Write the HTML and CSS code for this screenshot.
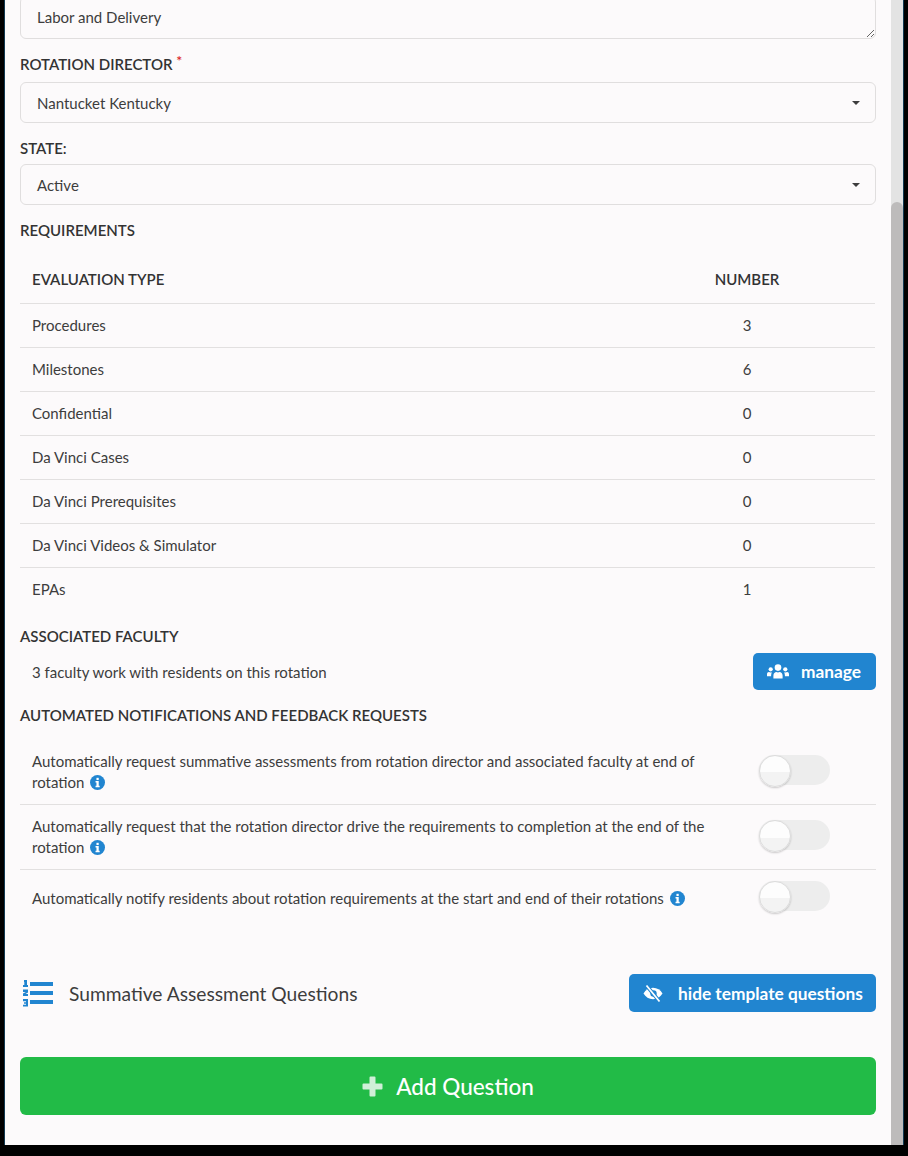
FILE: index.html
```html
<!DOCTYPE html>
<html lang="en">
<head>
    <meta charset="UTF-8">
    <title>Edit Rotation</title>
    <link rel="stylesheet" href="styles.css">
</head>
<body>
    <div class="window">
        <main class="form">
            <textarea class="field textarea" rows="1">Labor and Delivery</textarea>

            <label class="label label-director">ROTATION DIRECTOR <span class="required">*</span></label>
            <div class="field select">
                <span>Nantucket Kentucky</span>
                <span class="caret"></span>
            </div>

            <label class="label label-state">STATE:</label>
            <div class="field select">
                <span>Active</span>
                <span class="caret"></span>
            </div>

            <div class="label label-requirements">REQUIREMENTS</div>
            <table class="requirements">
                <thead>
                    <tr><th>EVALUATION TYPE</th><th class="number">NUMBER</th></tr>
                </thead>
                <tbody>
                    <tr><td>Procedures</td><td class="number">3</td></tr>
                    <tr><td>Milestones</td><td class="number">6</td></tr>
                    <tr><td>Confidential</td><td class="number">0</td></tr>
                    <tr><td>Da Vinci Cases</td><td class="number">0</td></tr>
                    <tr><td>Da Vinci Prerequisites</td><td class="number">0</td></tr>
                    <tr><td>Da Vinci Videos &amp; Simulator</td><td class="number">0</td></tr>
                    <tr><td>EPAs</td><td class="number">1</td></tr>
                </tbody>
            </table>

            <div class="label label-faculty">ASSOCIATED FACULTY</div>
            <div class="faculty-row">
                <span>3 faculty work with residents on this rotation</span>
                <button class="btn btn-manage">
                    <svg class="btn-icon" width="22" height="15" viewBox="0 0 22 15" fill="#fff">
                        <circle cx="11" cy="3.6" r="3.3"/>
                        <path d="M6.4 14.6v-2.9c0-2.4 1.6-3.7 3-3.7.5.3 1 .5 1.6.5s1.100-.2 1.600-.5c1.400 0 3 1.300 3 3.700v2.900z"/>
                        <circle cx="3.700" cy="5.300" r="2.100"/>
                        <circle cx="18.300" cy="5.300" r="2.100"/>
                        <path d="M0 12.300v-2c0-1.400.9-2.300 1.900-2.300.5.3 1.100.5 1.800.5.5 0 .9-.1 1.300-.2-.6.900-.9 2-.9 3.200v.8z"/>
                        <path d="M22 12.300v-2c0-1.400-.9-2.300-1.900-2.300-.5.3-1.100.5-1.800.5-.5 0-.9-.1-1.300-.2.600.9.900 2 .9 3.200v.8z"/>
                    </svg>
                    manage
                </button>
            </div>

            <div class="label label-auto">AUTOMATED NOTIFICATIONS AND FEEDBACK REQUESTS</div>
            <div class="notifications">
                <div class="notify-row">
                    <p>Automatically request summative assessments from rotation director and associated faculty at end of rotation <svg class="info" viewBox="0 0 16 16"><circle cx="8" cy="8" r="8" fill="#2185d0"/><rect x="6.900" y="3" width="2.400" height="2.400" fill="#fff"/><path d="M5.900 6.500h3.400v5h1v1.500H5.900v-1.500h1v-3.500h-1z" fill="#fff"/></svg></p>
                    <span class="toggle"></span>
                </div>
                <div class="notify-row">
                    <p>Automatically request that the rotation director drive the requirements to completion at the end of the rotation <svg class="info" viewBox="0 0 16 16"><circle cx="8" cy="8" r="8" fill="#2185d0"/><rect x="6.900" y="3" width="2.400" height="2.400" fill="#fff"/><path d="M5.900 6.500h3.400v5h1v1.500H5.900v-1.500h1v-3.500h-1z" fill="#fff"/></svg></p>
                    <span class="toggle"></span>
                </div>
                <div class="notify-row notify-last">
                    <p>Automatically notify residents about rotation requirements at the start and end of their rotations <svg class="info" viewBox="0 0 16 16"><circle cx="8" cy="8" r="8" fill="#2185d0"/><rect x="6.900" y="3" width="2.400" height="2.400" fill="#fff"/><path d="M5.900 6.500h3.400v5h1v1.500H5.900v-1.500h1v-3.500h-1z" fill="#fff"/></svg></p>
                    <span class="toggle"></span>
                </div>
            </div>

            <div class="summative-row">
                <div class="summative-title">
                    <svg class="list-icon" width="30" height="27" viewBox="0 0 30 27" fill="#2185d0">
                        <rect x="7" y="2" width="23" height="4"/>
                        <rect x="7" y="11" width="23" height="4"/>
                        <rect x="7" y="20" width="23" height="4"/>
                        <path d="M1 0h3v5h1v2H0V5h1.300V2H1z"/>
                        <path d="M0 9.500h5v3l-2.500 1.500H5v2H0v-2.500L2.800 12H0z"/>
                        <path d="M0 19h5v7.500H0v-1.800h3v-1H1v-1.500h2v-1H0z"/>
                    </svg>
                    <span>Summative Assessment Questions</span>
                </div>
                <button class="btn btn-hide">
                    <svg class="btn-icon" width="20" height="17" viewBox="0 0 20 17">
                        <path d="M0.500 8.500C2.500 5 6 2.800 10 2.800s7.500 2.200 9.500 5.700c-2 3.500-5.500 5.700-9.500 5.700S2.500 12 .5 8.500z" fill="#fff"/>
                        <circle cx="10.500" cy="8.500" r="3.200" fill="#2185d0"/>
                        <path d="M3.500 0.500 16.500 16.500" stroke="#2185d0" stroke-width="3.600"/>
                        <path d="M3.500 0.500 16.500 16.500" stroke="#fff" stroke-width="1.700"/>
                    </svg>
                    hide template questions
                </button>
            </div>

            <button class="btn-add">
                <svg width="21" height="21" viewBox="0 0 21 21" fill="#d0efd8">
                    <path d="M7.500 1.500a1 1 0 0 1 1-1h4a1 1 0 0 1 1 1v6h6a1 1 0 0 1 1 1v4a1 1 0 0 1-1 1h-6v6a1 1 0 0 1-1 1h-4a1 1 0 0 1-1-1v-6h-6a1 1 0 0 1-1-1v-4a1 1 0 0 1 1-1h6z"/>
                </svg>
                Add Question
            </button>
        </main>

        <div class="scrollbar">
            <div class="scrollbar-thumb"></div>
        </div>
    </div>
</body>
</html>
```

FILE: styles.css
```css
* {
    box-sizing: border-box;
}

html, body {
    margin: 0;
    height: 1156px;
    overflow: hidden;
}

body {
    background: #000;
    font-family: Lato, "Open Sans", sans-serif;
    font-size: 15px;
    color: #3d3d3d;
}

.window {
    display: flex;
    width: 900px;
    height: 1145px;
    margin-left: 4px;
    border-left: 1px solid #123a52;
    border-right: 1px solid #123a52;
    background: #fcfafb;
    overflow: hidden;
}

.form {
    width: 886px;
    flex: none;
    padding-left: 15px;
}

.scrollbar {
    width: 12px;
    flex: none;
    height: 1145px;
    padding-top: 202px;
    background: #e3e3e3;
}

.scrollbar-thumb {
    height: 100%;
    background: #bdbbbb;
    border-radius: 6px 6px 0 0;
}

/* fields */
.field {
    display: block;
    width: 856px;
    border: 1px solid #e0dede;
    border-radius: 6px;
    background: #fcfafb;
    color: #3d3d3d;
    font: 15px/20px Lato, sans-serif;
}

.textarea {
    height: 43px;
    margin: -4px 0 0;
    padding: 10px 16px;
    resize: vertical;
}

.select {
    display: flex;
    justify-content: space-between;
    align-items: center;
    height: 41px;
    padding: 0 15px 0 16px;
}

.caret {
    width: 0;
    height: 0;
    border-left: 4px solid transparent;
    border-right: 4px solid transparent;
    border-top: 4px solid #3d3d3d;
}

.label {
    display: block;
    font-weight: 600;
    font-size: 15px;
    line-height: 20px;
    color: #333;
}

.required {
    position: relative;
    top: -4px;
    color: #db2828;
    font-size: 14px;
}

.label-director { margin: 15px 0 7px; }
.label-state { margin: 15px 0 6px; }
.label-requirements { margin: 15px 0 0; }
.label-faculty { margin: 15px 0 0; }
.label-auto { margin: 15px 0 0; }

/* requirements table */
.requirements {
    width: 855px;
    margin-top: 19px;
    border-collapse: collapse;
}

.requirements th {
    height: 44px;
    padding: 0 12px 4px;
    text-align: left;
    font-weight: 600;
    font-size: 15px;
    color: #333;
}

.requirements td {
    height: 44px;
    padding: 0 12px;
    border-top: 1px solid #e2e0e0;
}

.requirements .number {
    width: 256px;
    text-align: center;
}

/* faculty */
.faculty-row {
    display: flex;
    justify-content: space-between;
    align-items: center;
    width: 856px;
    height: 37px;
    margin-top: 7px;
    padding-left: 12px;
}

.btn {
    display: flex;
    align-items: center;
    border: none;
    border-radius: 5px;
    background: #2185d0;
    color: #fff;
    font-family: Lato, sans-serif;
    font-weight: 700;
    font-size: 17.300px;
}

.btn-manage {
    width: 123px;
    height: 37px;
    padding: 0 0 0 14px;
}

.btn-manage .btn-icon {
    margin-right: 12px;
}

.btn-hide {
    width: 247px;
    height: 38px;
    padding: 0 0 0 14px;
}

.btn-hide .btn-icon {
    margin-right: 15px;
}

/* notifications */
.notifications {
    width: 856px;
    margin-top: 15px;
}

.notify-row {
    display: flex;
    justify-content: space-between;
    align-items: center;
    height: 65px;
    padding: 0 46px 0 12px;
    border-bottom: 1px solid #e2e0e0;
}

.notify-row p {
    width: 680px;
    margin: 0;
    line-height: 21px;
}

.notify-last {
    height: 56px;
    border-bottom: none;
}

.info {
    width: 15px;
    height: 15px;
    margin-left: 2px;
    vertical-align: -2px;
}

.toggle {
    position: relative;
    display: block;
    flex: none;
    width: 71px;
    height: 30px;
    margin-bottom: 4px;
    border-radius: 15px;
    background: #ededed;
}

.toggle::after {
    content: "";
    position: absolute;
    left: 0;
    top: 0;
    width: 30px;
    height: 30px;
    border-radius: 50%;
    background: linear-gradient(#fdfdfd 55%, #f3f3f3 55%);
    border: 1px solid #dcdcdc;
    box-shadow: 0 1px 2px rgba(0, 0, 0, 0.2);
}

/* summative */
.summative-row {
    display: flex;
    justify-content: space-between;
    align-items: center;
    width: 856px;
    height: 38px;
    margin-top: 48px;
}

.summative-title {
    display: flex;
    align-items: center;
    padding-left: 3px;
    font-size: 19.200px;
}

.list-icon {
    margin-right: 16px;
}

.btn-add {
    display: flex;
    align-items: center;
    justify-content: center;
    gap: 13px;
    width: 856px;
    height: 58px;
    margin-top: 45px;
    border: none;
    border-radius: 6px;
    background: #22bb47;
    color: #fff;
    font-family: Lato, sans-serif;
    font-size: 22.500px;
    font-weight: 500;
}
```
